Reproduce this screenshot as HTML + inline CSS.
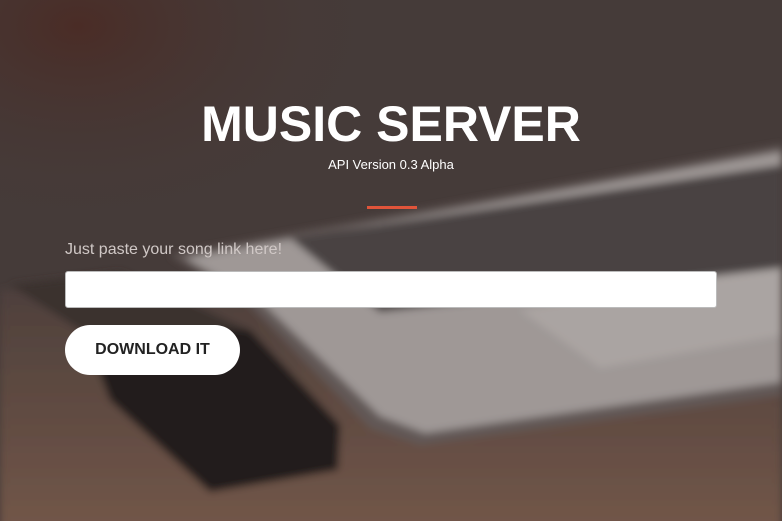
<!DOCTYPE html>
<html><head><style>
html,body{margin:0;padding:0}
body{width:782px;height:521px;overflow:hidden;position:relative;font-family:"Liberation Sans",sans-serif;background:#463b39}
svg.bg{position:absolute;left:0;top:0}
h1{position:absolute;top:95px;left:0;width:782px;text-align:center;margin:0;color:#fff;font-size:50px;font-weight:bold}
.sub{position:absolute;top:157px;left:0;width:782px;text-align:center;color:#fff;font-size:13px}
.bar{position:absolute;left:367px;top:206px;width:50px;height:3px;background:#e0543a}
.lbl{position:absolute;left:65px;top:241px;color:#d0c8c6;font-size:16px}
.inp{position:absolute;left:65px;top:271px;width:652px;height:37px;background:#fff;border-radius:3px;border:1px solid #bbb;box-sizing:border-box}
.btn{position:absolute;left:65px;top:325px;width:175px;height:50px;background:#fff;border-radius:25px;color:#222;font-weight:bold;font-size:16px;text-align:center;line-height:50px}
</style></head><body>
<svg class="bg" width="782" height="521" viewBox="0 0 782 521">
<defs>
<linearGradient id="w" x1="0" y1="0" x2="0" y2="1"><stop offset="0" stop-color="#4e403c"/><stop offset="1" stop-color="#725648"/></linearGradient>
<radialGradient id="tl" cx="0.1" cy="0.05" r="0.4"><stop offset="0" stop-color="#4a2c26"/><stop offset="1" stop-color="#463b39" stop-opacity="0"/></radialGradient>
<filter id="b"><feGaussianBlur stdDeviation="4"/></filter>
</defs>
<rect width="782" height="521" fill="#453b39"/>
<rect width="782" height="521" fill="url(#tl)"/>
<g filter="url(#b)">
<rect y="290" width="782" height="240" fill="url(#w)"/>
<polygon points="170,255 782,145 782,395 420,445 370,428 250,305" fill="#625856"/>
<polygon points="185,258 782,152 782,382 425,433 380,416 262,302" fill="#9f9896"/>
<polygon points="290,238 782,165 782,268 380,312" fill="#4a4242"/>
<polygon points="520,310 782,268 782,335 600,368" fill="#aaa4a2"/>
<polygon points="80,320 250,330 340,425 338,470 210,492 110,400" fill="#241d1d"/>
<polygon points="10,285 120,272 250,330 80,330" fill="#3a302e"/>
</g>
</svg>
<h1>MUSIC SERVER</h1>
<div class="sub">API Version 0.3 Alpha</div>
<div class="bar"></div>
<div class="lbl">Just paste your song link here!</div>
<div class="inp"></div>
<div class="btn">DOWNLOAD IT</div>
</body></html>
